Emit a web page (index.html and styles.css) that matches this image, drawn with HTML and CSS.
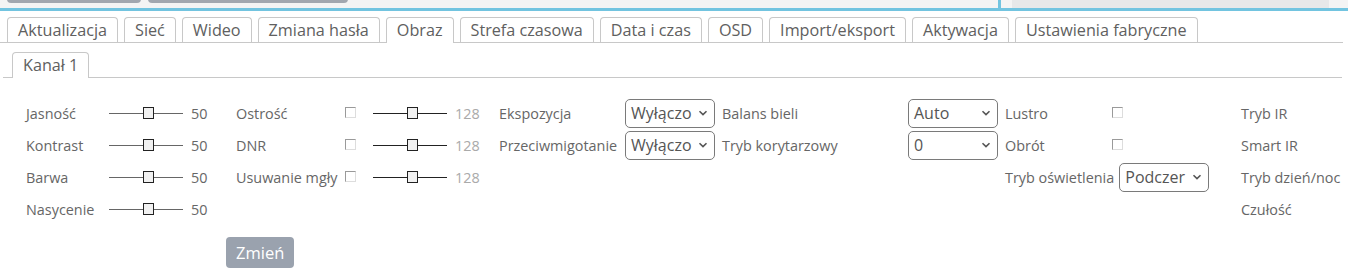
FILE: index.html
```html
<!DOCTYPE html>
<html lang="pl">
<head>
  <meta charset="UTF-8" />
  <title>Obraz</title>
  <link rel="stylesheet" href="styles.css">
</head>
<body>

<div class="topstrip">
  <div class="topbtn btn-a"></div>
  <div class="topbtn btn-b"></div>
  <div class="topfield"></div>
</div>

<div class="tabs">
  <div class="tab">Aktualizacja</div>
  <div class="tab">Sieć</div>
  <div class="tab">Wideo</div>
  <div class="tab">Zmiana hasła</div>
  <div class="tab active">Obraz</div>
  <div class="tab">Strefa czasowa</div>
  <div class="tab">Data i czas</div>
  <div class="tab">OSD</div>
  <div class="tab">Import/eksport</div>
  <div class="tab">Aktywacja</div>
  <div class="tab">Ustawienia fabryczne</div>
</div>

<div class="tabs subtabs">
  <div class="tab active">Kanał 1</div>
</div>

<div class="panel">
  <div class="group g1">
    <div class="row"><span class="label">Jasność</span><span class="slider"><i></i></span><span class="value">50</span></div>
    <div class="row"><span class="label">Kontrast</span><span class="slider"><i></i></span><span class="value">50</span></div>
    <div class="row"><span class="label">Barwa</span><span class="slider"><i></i></span><span class="value">50</span></div>
    <div class="row"><span class="label">Nasycenie</span><span class="slider"><i></i></span><span class="value">50</span></div>
  </div>

  <div class="group g2">
    <div class="row"><span class="label">Ostrość</span><span class="check"></span><span class="slider dark"><i></i></span><span class="value off">128</span></div>
    <div class="row"><span class="label">DNR</span><span class="check"></span><span class="slider dark"><i></i></span><span class="value off">128</span></div>
    <div class="row"><span class="label">Usuwanie mgły</span><span class="check"></span><span class="slider dark"><i></i></span><span class="value off">128</span></div>
  </div>

  <div class="group g3">
    <div class="row"><span class="label">Ekspozycja</span>
      <span class="select"><span class="opt">Wyłączo</span><svg viewBox="0 0 10 6"><path d="M1.5 1.2 L5 4.6 L8.5 1.2" /></svg></span></div>
    <div class="row"><span class="label">Przeciwmigotanie</span>
      <span class="select"><span class="opt">Wyłączo</span><svg viewBox="0 0 10 6"><path d="M1.5 1.2 L5 4.6 L8.5 1.2" /></svg></span></div>
  </div>

  <div class="group g4">
    <div class="row"><span class="label">Balans bieli</span>
      <span class="select"><span class="opt">Auto</span><svg viewBox="0 0 10 6"><path d="M1.5 1.2 L5 4.6 L8.5 1.2" /></svg></span></div>
    <div class="row"><span class="label">Tryb korytarzowy</span>
      <span class="select"><span class="opt">0</span><svg viewBox="0 0 10 6"><path d="M1.5 1.2 L5 4.6 L8.5 1.2" /></svg></span></div>
  </div>

  <div class="group g5">
    <div class="row"><span class="label">Lustro</span><span class="check"></span></div>
    <div class="row"><span class="label">Obrót</span><span class="check"></span></div>
    <div class="row"><span class="label wide">Tryb oświetlenia</span>
      <span class="select"><span class="opt">Podczer</span><svg viewBox="0 0 10 6"><path d="M1.5 1.2 L5 4.6 L8.5 1.2" /></svg></span></div>
  </div>

  <div class="group g6">
    <div class="row"><span class="label">Tryb IR</span></div>
    <div class="row"><span class="label">Smart IR</span></div>
    <div class="row"><span class="label">Tryb dzień/noc</span></div>
    <div class="row"><span class="label">Czułość</span></div>
  </div>
</div>

<div class="actions">
  <button class="save">Zmień</button>
</div>

</body>
</html>
```

FILE: styles.css
```css
body {
  margin: 0;
  font-family: 'Open Sans', 'Noto Sans', sans-serif;
  color: #666;
  background: #fff;
  overflow: hidden;
}

/* leftovers of the header above */
.topstrip {
  height: 8px;
  background: #f4f4f4;
  border-bottom: 3px solid #72c4e0;
  display: flex;
  align-items: flex-end;
  overflow: hidden;
}
.topbtn {
  height: 20px;
  background: #a1a7af;
  border-radius: 4px;
  margin-bottom: 5px;
}
.btn-a { width: 134px; margin-left: 7px; }
.btn-b { width: 200px; margin-left: 7px; }
.topfield {
  height: 8px;
  width: 317px;
  margin-left: 650px;
  border-left: 3px solid #72c4e0;
  padding-left: 11px;
  background: #f4f4f4;
}
.topfield::after {
  content: "";
  display: block;
  height: 8px;
  background: #e7e8e9;
}

.tabs {
  display: flex;
  gap: 6px;
  margin: 6px 5px 0 0;
  padding-left: 7px;
  border-bottom: 1px solid #c8c8c8;
}
.tab {
  height: 24px;
  line-height: 24px;
  padding: 0 10px;
  border: 1px solid #c8c8c8;
  border-bottom: none;
  border-radius: 4px 4px 0 0;
  font-size: 16.2px;
  color: #606060;
  background: #fff;
}
.tab.active {
  margin-bottom: -1px;
  height: 25px;
}
.subtabs {
  margin: 9px 6px 0 3px;
  padding-left: 9px;
}

.panel {
  display: flex;
  padding: 19px 0 0 26px;
  font-size: 14.4px;
}
.group { display: flex; flex-direction: column; }
.g1 { width: 210px; }
.g2 { width: 263px; }
.g3 { width: 223px; }
.g4 { width: 283px; }
.g5 { width: 236px; }

.row {
  height: 32px;
  display: flex;
  align-items: center;
  white-space: nowrap;
}
.g1 .label { width: 83px; }
.g2 .label { width: 109px; }
.g3 .label { width: 126px; }
.g4 .label { width: 186px; }
.g5 .label { width: 107px; }
.g5 .label.wide { width: auto; margin-right: 5px; }

.slider {
  position: relative;
  width: 74px;
  height: 1px;
  background: #666;
  margin-right: 8px;
}
.slider.dark { background: #222; }
.slider i {
  position: absolute;
  left: 34px;
  top: -6px;
  width: 11px;
  height: 12px;
  border: 1px solid #222;
  background: #f1f1f1;
  box-sizing: border-box;
}
.value { color: #666; }
.value.off { color: #aaa; }

.check {
  width: 11px;
  height: 11px;
  box-sizing: border-box;
  border: 1px solid #9a9a9a;
  border-right-color: #ddd;
  border-bottom-color: #ddd;
  background: #fff;
  margin: -2px 17px 0 0;
}

.select {
  width: 90px;
  height: 29px;
  box-sizing: border-box;
  border: 1px solid #7a7a7a;
  border-radius: 5px;
  display: flex;
  align-items: center;
  padding: 0 6px 0 5px;
  font-size: 16px;
  color: #555;
}
.select .opt {
  flex: 1;
  white-space: nowrap;
  margin-right: 4px;
}
.select svg {
  width: 10px;
  height: 6px;
  fill: none;
  stroke: #555;
  stroke-width: 1.6;
}

.actions { padding: 12px 0 0 226px; }
.save {
  height: 31px;
  padding: 0 10px;
  border: none;
  border-radius: 4px;
  background: #9aa2ae;
  color: #fff;
  font-family: inherit;
  font-size: 16.5px;
}
```
